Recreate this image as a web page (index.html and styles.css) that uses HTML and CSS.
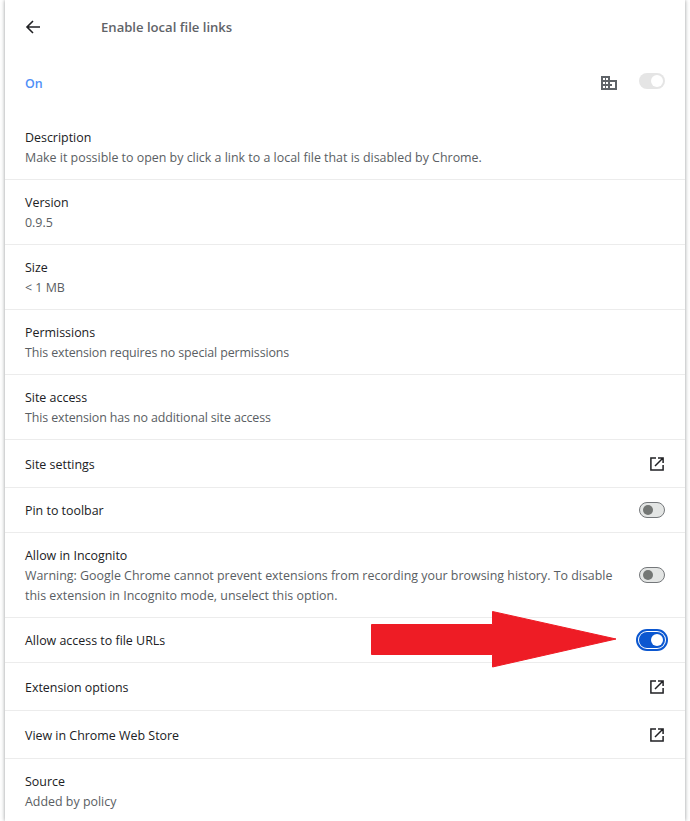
FILE: index.html
```html
<!DOCTYPE html>
<html lang="en">
<head>
<meta charset="utf-8">
<title>Enable local file links</title>
<link rel="stylesheet" href="styles.css">
</head>
<body>
<main class="card">
  <header class="head">
    <svg class="back" viewBox="0 0 16 16" width="16" height="16"><path d="M15 8H2.500M8 2 2 8l6 6" fill="none" stroke="#202124" stroke-width="1.600"/></svg>
    <h1 class="title">Enable local file links</h1>
  </header>
  <div class="on-row">
    <span class="on">On</span>
    <svg class="building" viewBox="0 0 16 14" width="16" height="14"><path fill="#5f6368" fill-rule="evenodd" d="M0 0h9v4h7v10H0zM2 2v2h2V2zm3 0v2h2V2zM2 6v2h2V6zm3 0v2h2V6zM2 10v2h2v-2zm3 0v2h2v-2zm4-4v2h2v2H9v2h5V6z"/></svg>
    <span class="toggle managed"><span class="knob"></span></span>
  </div>
  <section class="row first"><div class="label">Description</div><div class="sub">Make it possible to open by click a link to a local file that is disabled by Chrome.</div></section>
  <section class="row"><div class="label">Version</div><div class="sub">0.9.5</div></section>
  <section class="row"><div class="label">Size</div><div class="sub">&lt; 1 MB</div></section>
  <section class="row"><div class="label">Permissions</div><div class="sub tight">This extension requires no special permissions</div></section>
  <section class="row"><div class="label">Site access</div><div class="sub tight">This extension has no additional site access</div></section>
  <section class="row link"><div class="label">Site settings</div>
    <svg class="ext" viewBox="0 0 16 16" width="16" height="16"><path d="M7 1.900H1.900v12.200h12.200V9M6 10l8-8M9 1.900h5.100V7" fill="none" stroke="#202124" stroke-width="1.500"/></svg></section>
  <section class="row action"><div class="label">Pin to toolbar</div><span class="toggle off"><span class="knob"></span></span></section>
  <section class="row tall">
    <div class="tall-text"><div class="label">Allow in Incognito</div><div class="sub">Warning: Google Chrome cannot prevent extensions from recording your browsing history. To disable this extension in Incognito mode, unselect this option.</div></div>
    <span class="toggle off"><span class="knob"></span></span></section>
  <section class="row action"><div class="label">Allow access to file URLs</div><span class="toggle active"><span class="knob"></span></span></section>
  <section class="row link"><div class="label">Extension options</div>
    <svg class="ext" viewBox="0 0 16 16" width="16" height="16"><path d="M7 1.900H1.900v12.200h12.200V9M6 10l8-8M9 1.900h5.100V7" fill="none" stroke="#202124" stroke-width="1.500"/></svg></section>
  <section class="row link"><div class="label">View in Chrome Web Store</div>
    <svg class="ext" viewBox="0 0 16 16" width="16" height="16"><path d="M7 1.900H1.900v12.200h12.200V9M6 10l8-8M9 1.900h5.100V7" fill="none" stroke="#202124" stroke-width="1.500"/></svg></section>
  <section class="row"><div class="label">Source</div><div class="sub">Added by policy</div></section>
  <svg class="arrow" viewBox="0 0 246 57" width="246" height="57"><path d="M.5 13.500H121.500V.5L245 28 121.500 56V43.500H.5z" fill="#ee1c25" stroke="#ee1c25" stroke-linejoin="round"/></svg>
</main>
</body>
</html>
```
FILE: styles.css
```css
html, body { margin: 0; padding: 0; background: #fff; }
body {
  height: 821px;
  overflow: hidden;
  font-family: "Open Sans", "Noto Sans", sans-serif;
  font-size: 12.43px;
  color: #202124;
}
.card {
  position: relative;
  box-sizing: border-box;
  width: 680px;
  height: 821px;
  margin-left: 5px;
  background: #fff;
  box-shadow: 0 0 4px rgba(60, 64, 67, .55);
}
.head {
  display: flex;
  align-items: center;
  height: 53px;
  padding-left: 20px;
}
.back { flex: none; }
.title {
  margin: 0 0 0 60px;
  font-size: 13.1px;
  font-weight: 600;
  color: #5f6368;
}
.on-row {
  box-sizing: border-box;
  display: flex;
  align-items: center;
  height: 58px;
  padding: 2px 20px 0;
}
.on { flex: 1; font-weight: 600; color: #4f8ff7; }
.building { margin-right: 22px; }
.row {
  box-sizing: border-box;
  border-top: 1px solid #ececec;
  padding: 13px 20px 11px;
  line-height: 20px;
  min-height: 65px;
}
.row.first { border-top: 0; padding-top: 17px; height: 68px; }
.label { color: #202124; }
.sub { color: #5a5e63; }
.tight { letter-spacing: -0.12px; }
.link, .action, .tall {
  display: flex;
  align-items: center;
  justify-content: space-between;
}
.link { height: 48px; min-height: 48px; padding-top: 3px; padding-bottom: 0; }
.action { height: 45px; min-height: 45px; padding-top: 1px; padding-bottom: 0; }
.tall { height: 85px; }
.tall-text { width: 600px; }
.toggle {
  box-sizing: border-box;
  display: flex;
  align-items: center;
  width: 26px;
  height: 16px;
  border-radius: 8px;
  padding: 0 3px;
  margin-top: -2px;
}
.knob { width: 10px; height: 10px; border-radius: 50%; }
.toggle.off { border: 1px solid #74777a; background: #e3e5e4; justify-content: flex-start; }
.toggle.off .knob { background: #747775; }
.toggle.managed { background: #e5e5e5; justify-content: flex-end; padding: 0 2px; margin-top: -4px; }
.toggle.managed .knob { width: 12px; height: 12px; background: #fff; }
.toggle.active { background: #0b57d0; justify-content: flex-end; outline: 2px solid #0b57d0; outline-offset: 1px; }
.toggle.active .knob { width: 12px; height: 12px; background: #fff; margin-right: -1px; }
.ext { flex: none; margin-top: -2px; }
.arrow { position: absolute; left: 366px; top: 611px; }
```
